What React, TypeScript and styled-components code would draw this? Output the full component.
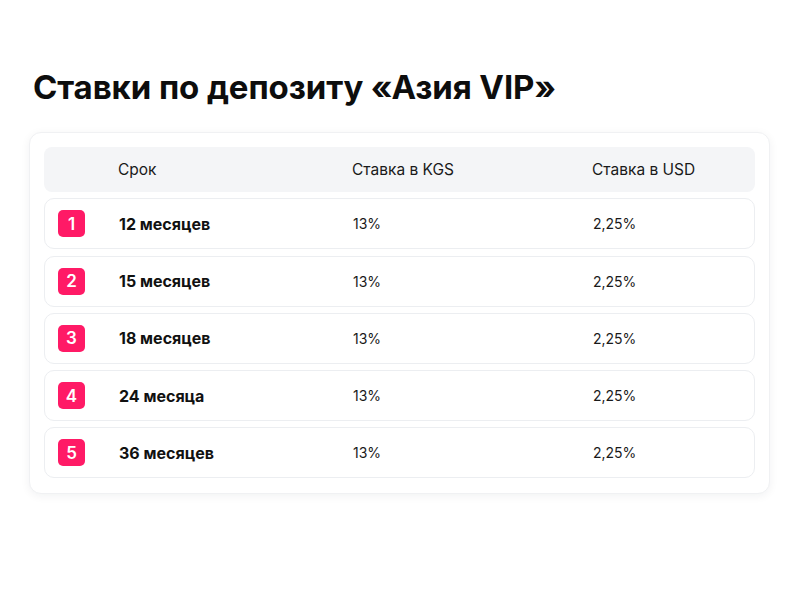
import React from "react";
import styled, { createGlobalStyle } from "styled-components";

const GlobalStyle = createGlobalStyle`
  html, body {
    margin: 0;
    padding: 0;
    background: #ffffff;
  }
  body {
    font-family: Inter, "Noto Sans", sans-serif;
    color: #111111;
  }
`;

const Page = styled.div`
  width: 800px;
  height: 600px;
  box-sizing: border-box;
  padding: 67px 30px 0 29px;
`;

const Title = styled.h1`
  margin: 0 0 24px 4px;
  font-size: 33px;
  line-height: 41px;
  font-weight: 700;
  letter-spacing: -0.1px;
  color: #0d0d0d;
`;

const Card = styled.div`
  width: 741px;
  box-sizing: border-box;
  padding: 14px 14px 15px 14px;
  border-radius: 12px;
  background: #ffffff;
  border: 1px solid #f0f1f3;
  box-shadow: 0 2px 10px rgba(20, 30, 50, 0.06);
  display: flex;
  flex-direction: column;
  gap: 6.25px;
`;

const Grid = styled.div`
  display: grid;
  grid-template-columns: 74px 234px 240px 1fr;
  align-items: center;
`;

const Header = styled(Grid)`
  height: 45px;
  border-radius: 8px;
  background: #f4f5f7;
  font-size: 15.5px;
  color: #1a1a1a;
`;

const Row = styled(Grid)`
  height: 51px;
  box-sizing: border-box;
  border: 1px solid #eceef1;
  border-radius: 10px;
  font-size: 14px;
  color: #1a1a1a;
`;

const BadgeCell = styled.div`
  padding-left: 13px;
`;

const Badge = styled.span`
  width: 27px;
  height: 27px;
  border-radius: 5px;
  background: #ff1a66;
  color: #ffffff;
  font-size: 17px;
  font-weight: 600;
  display: flex;
  align-items: center;
  justify-content: center;
`;

const Term = styled.span`
  font-size: 16px;
  font-weight: 700;
  color: #111111;
`;

const rows = [
  { n: 1, term: "12 месяцев" },
  { n: 2, term: "15 месяцев" },
  { n: 3, term: "18 месяцев" },
  { n: 4, term: "24 месяца" },
  { n: 5, term: "36 месяцев" },
];

export default function App() {
  return (
    <>
      <GlobalStyle />
      <Page>
        <Title>Ставки по депозиту «Азия VIP»</Title>
        <Card>
          <Header>
            <span />
            <span>Срок</span>
            <span>Ставка в KGS</span>
            <span>Ставка в USD</span>
          </Header>
          {rows.map((row) => (
            <Row key={row.n}>
              <BadgeCell>
                <Badge>{row.n}</Badge>
              </BadgeCell>
              <Term>{row.term}</Term>
              <span>13%</span>
              <span>2,25%</span>
            </Row>
          ))}
        </Card>
      </Page>
    </>
  );
}
